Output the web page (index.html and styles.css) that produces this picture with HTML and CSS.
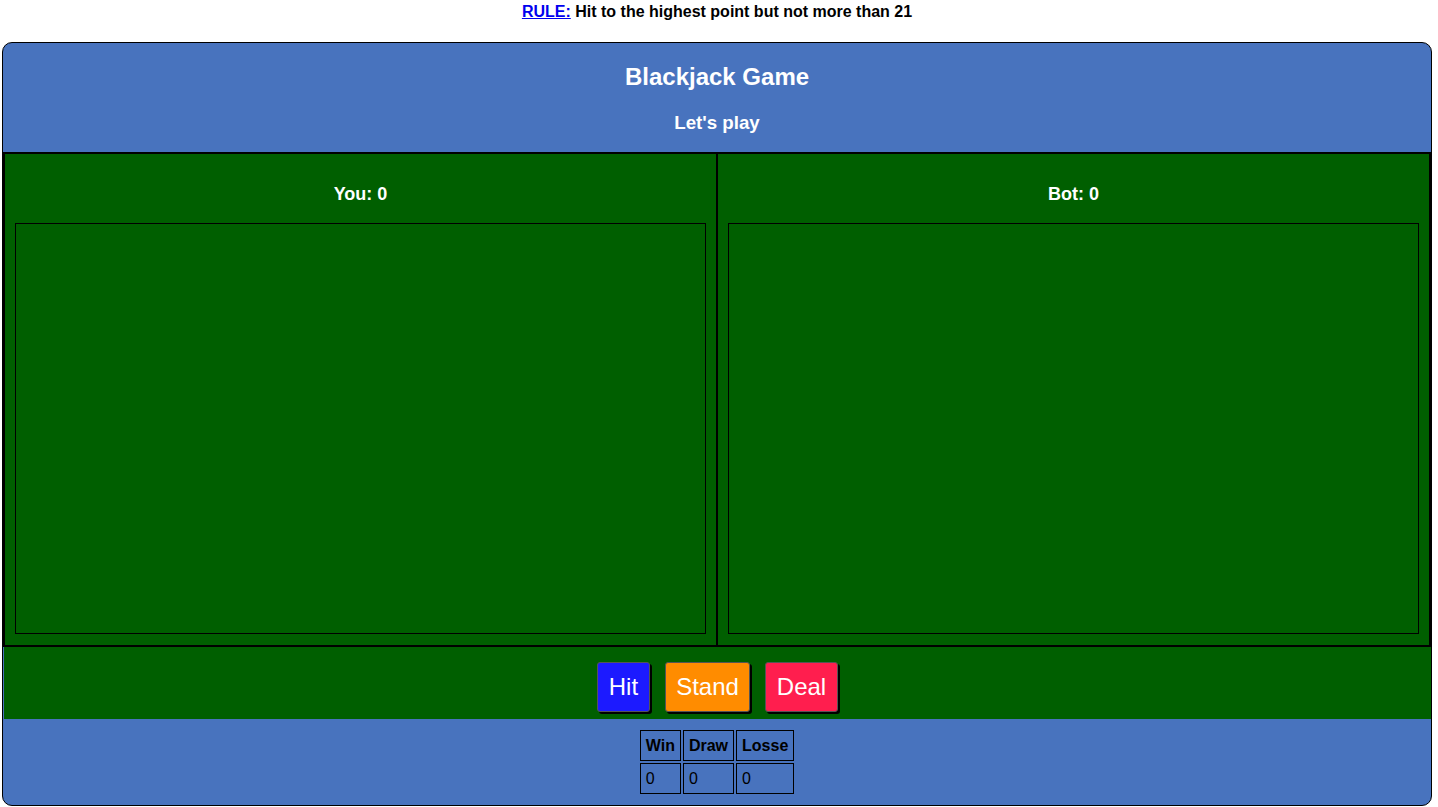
FILE: index.html
```html
<!DOCTYPE html>
<html>
<head>
<meta charset="utf-8">
<title>Blackjack</title>
<link rel="stylesheet" href="styles.css">
</head>
<body>
<div class="rule"><a href="#" class="rule-link">RULE:</a> Hit to the highest point but not more than 21</div>
<div class="game">
  <div class="header">
    <h2 class="title">Blackjack Game</h2>
    <h3 class="subtitle">Let's play</h3>
  </div>
  <div class="board">
    <div class="side">
      <h3 class="score">You: <span>0</span></h3>
      <div class="cards"></div>
    </div>
    <div class="side side-right">
      <h3 class="score">Bot: <span>0</span></h3>
      <div class="cards"></div>
    </div>
  </div>
  <div class="controls">
    <button class="btn btn-hit">Hit</button>
    <button class="btn btn-stand">Stand</button>
    <button class="btn btn-deal">Deal</button>
  </div>
  <div class="footer">
    <table class="stats">
      <tr><th>Win</th><th>Draw</th><th>Losse</th></tr>
      <tr><td>0</td><td>0</td><td>0</td></tr>
    </table>
  </div>
</div>
</body>
</html>
```
FILE: styles.css
```css
html, body {
  margin: 0;
  padding: 0;
  background: #ffffff;
  font-family: "Liberation Sans", Arial, sans-serif;
}

.rule {
  text-align: center;
  font-weight: bold;
  font-size: 16px;
  line-height: 18px;
  padding: 3px 4px 0 0;
  height: 39px;
  color: #000;
}

.rule-link {
  color: #0000ee;
  text-decoration: underline;
}

.game {
  margin-left: 2px;
  width: 1430px;
  box-sizing: border-box;
  border: 1px solid #000;
  border-radius: 10px;
  overflow: hidden;
  background: #4873be;
}

.header {
  text-align: center;
  color: #fff;
  padding: 0.5px 0 1px;
}

.title {
  font-size: 24px;
  margin: 19px 0 21px;
  line-height: 28px;
}

.subtitle {
  font-size: 18.72px;
  margin: 0 0 17px;
  line-height: 22px;
}

.board {
  display: flex;
  border: 2px solid #000;
  background: #005f00;
  height: 495px;
  box-sizing: border-box;
}

.side {
  flex: 1;
  padding: 10px 10px 11px;
  display: flex;
  flex-direction: column;
}

.side-right {
  border-left: 2px solid #000;
}

.score {
  margin: 19px 0 18px;
  text-align: center;
  color: #fff;
  font-size: 18px;
  line-height: 22px;
}

.cards {
  flex: 1;
  border: 1px solid #000;
}

.controls {
  background: #005f00;
  display: flex;
  justify-content: center;
  gap: 15px;
  padding: 15px 0 7px;
  margin-left: 1px;
}

.btn {
  font-family: "Liberation Sans", Arial, sans-serif;
  font-size: 24px;
  line-height: 28px;
  color: #fff;
  padding: 10px 10.5px;
  border: 1px solid #555;
  border-radius: 3px;
  box-shadow: 2px 2px 0 #000;
  cursor: pointer;
}

.btn-hit { background: #1c1aff; }
.btn-stand { background: #ff8c00; }
.btn-deal { background: #ff1e4e; }

.footer {
  display: flex;
  justify-content: center;
  padding: 9px 0 9px;
}

.stats {
  border-spacing: 2px;
  font-size: 16px;
  color: #000;
}

.stats th,
.stats td {
  border: 1px solid #000;
  padding: 5px;
  line-height: 19px;
  text-align: left;
}

.stats td {
  font-weight: normal;
}
```
